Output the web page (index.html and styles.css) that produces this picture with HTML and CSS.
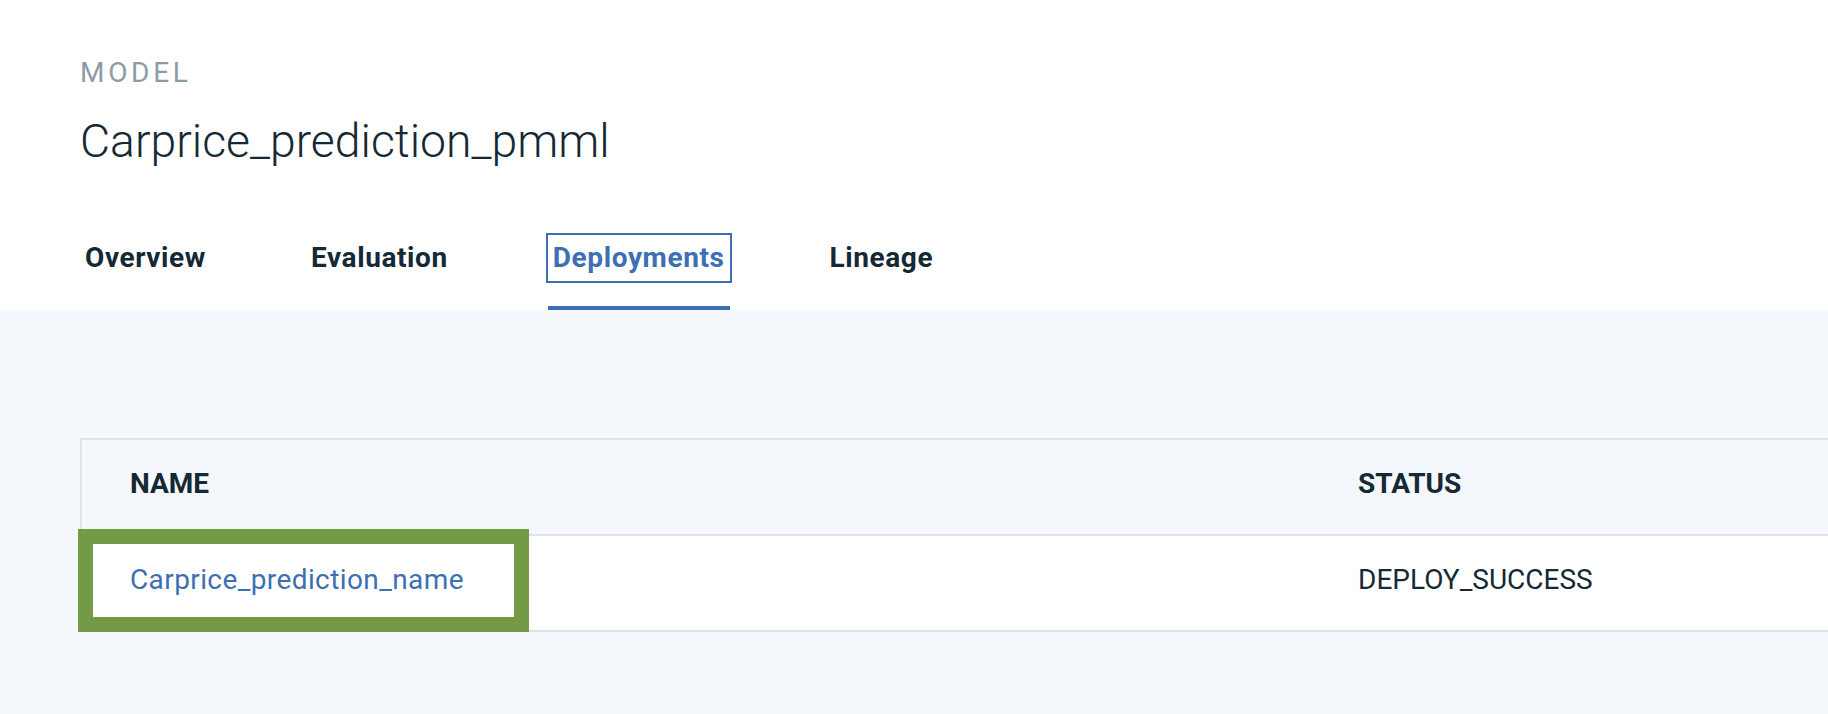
FILE: index.html
```html
<!DOCTYPE html>
<html lang="en">
<head>
<meta charset="utf-8">
<title>Carprice_prediction_pmml</title>
<link rel="stylesheet" href="styles.css">
</head>
<body>
<header class="page-header">
  <div class="eyebrow">MODEL</div>
  <h1 class="title">Carprice_prediction_pmml</h1>
  <nav class="tabs">
    <div class="tab"><a class="tab-link">Overview</a></div>
    <div class="tab"><a class="tab-link">Evaluation</a></div>
    <div class="tab tab-selected"><a class="tab-link">Deployments</a></div>
    <div class="tab"><a class="tab-link">Lineage</a></div>
  </nav>
</header>
<main class="content">
  <div class="table">
    <div class="row row-head">
      <div class="cell">NAME</div>
      <div class="cell">STATUS</div>
    </div>
    <div class="row row-body">
      <div class="cell cell-name">
        <a class="link">Carprice_prediction_name</a>
        <span class="highlight"></span>
      </div>
      <div class="cell">DEPLOY_SUCCESS</div>
    </div>
  </div>
</main>
</body>
</html>
```

FILE: styles.css
```css
html, body {
  margin: 0;
  padding: 0;
}
body {
  font-family: Roboto, "Liberation Sans", sans-serif;
  color: #152935;
  background: #f4f7fb;
  overflow: hidden;
}
.page-header {
  background: #ffffff;
  padding: 55px 0 0 80px;
}
.eyebrow {
  font-size: 28px;
  line-height: 36px;
  letter-spacing: 3.7px;
  color: #8c9ba5;
  font-weight: 400;
}
.title {
  margin: 22px 0 0 0;
  font-size: 46.3px;
  line-height: 56px;
  font-weight: 300;
  color: #152935;
}
.tabs {
  display: flex;
  gap: 95px;
  margin-top: 66px;
}
.tab {
  padding-bottom: 25px;
  border-bottom: 4px solid transparent;
}
.tab-link {
  display: block;
  padding: 0 5px;
  font-size: 28px;
  line-height: 46px;
  font-weight: 700;
  letter-spacing: 0.6px;
  color: #152935;
}
.tab-selected {
  border-bottom-color: #3d70b2;
}
.tab-selected .tab-link {
  color: #3d70b2;
  outline: 2px solid #3d70b2;
}
.content {
  padding: 128px 0 100px 80px;
}
.table {
  border-top: 2px solid #dfe3e6;
  border-left: 2px solid #dfe3e6;
  border-bottom: 2px solid #dfe3e6;
}
.row {
  display: grid;
  grid-template-columns: 1228px 1fr;
}
.row-head {
  background: #f4f7fb;
  border-bottom: 2px solid #dfe3e6;
  font-weight: 700;
}
.row-body {
  background: #ffffff;
}
.cell {
  padding: 26px 0 32px 48px;
  font-size: 28px;
  line-height: 36px;
  white-space: nowrap;
}
.cell-name {
  position: relative;
}
.link {
  color: #3d70b2;
  letter-spacing: 0.4px;
}
.highlight {
  position: absolute;
  left: -4px;
  top: -7px;
  width: 451px;
  height: 103px;
  box-sizing: border-box;
  border: 15px solid #739b45;
}
```
